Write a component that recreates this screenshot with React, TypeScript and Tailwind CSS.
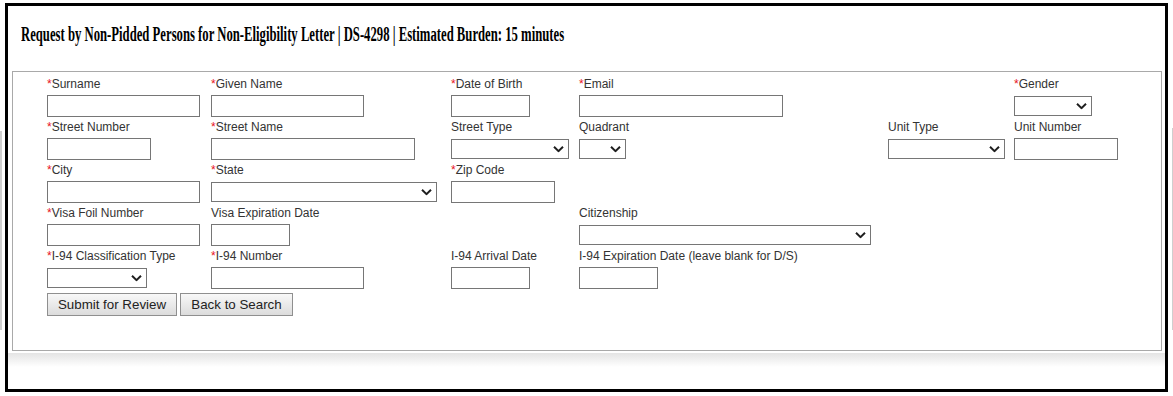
import type { ReactNode } from 'react';

type Field = {
  label: string;
  required?: boolean;
  kind: 'text' | 'select';
  width: number;
  col: string;
};

const widthClass: Record<number, string> = {
  47: 'w-[47px]',
  78: 'w-[78px]',
  79: 'w-[79px]',
  100: 'w-[100px]',
  104: 'w-[104px]',
  117: 'w-[117px]',
  118: 'w-[118px]',
  153: 'w-[153px]',
  204: 'w-[204px]',
  226: 'w-[226px]',
  292: 'w-[292px]',
};

// rows laid out on a 6-column grid, like the old table form
const rows: Field[][] = [
  [
    { label: 'Surname', required: true, kind: 'text', width: 153, col: 'col-start-1' },
    { label: 'Given Name', required: true, kind: 'text', width: 153, col: 'col-start-2' },
    { label: 'Date of Birth', required: true, kind: 'text', width: 79, col: 'col-start-3' },
    { label: 'Email', required: true, kind: 'text', width: 204, col: 'col-start-4' },
    { label: 'Gender', required: true, kind: 'select', width: 78, col: 'col-start-6' },
  ],
  [
    { label: 'Street Number', required: true, kind: 'text', width: 104, col: 'col-start-1' },
    { label: 'Street Name', required: true, kind: 'text', width: 204, col: 'col-start-2' },
    { label: 'Street Type', kind: 'select', width: 118, col: 'col-start-3' },
    { label: 'Quadrant', kind: 'select', width: 47, col: 'col-start-4' },
    { label: 'Unit Type', kind: 'select', width: 117, col: 'col-start-5' },
    { label: 'Unit Number', kind: 'text', width: 104, col: 'col-start-6' },
  ],
  [
    { label: 'City', required: true, kind: 'text', width: 153, col: 'col-start-1' },
    { label: 'State', required: true, kind: 'select', width: 226, col: 'col-start-2' },
    { label: 'Zip Code', required: true, kind: 'text', width: 104, col: 'col-start-3' },
  ],
  [
    { label: 'Visa Foil Number', required: true, kind: 'text', width: 153, col: 'col-start-1' },
    { label: 'Visa Expiration Date', kind: 'text', width: 79, col: 'col-start-2' },
    { label: 'Citizenship', kind: 'select', width: 292, col: 'col-start-4' },
  ],
  [
    { label: 'I-94 Classification Type', required: true, kind: 'select', width: 100, col: 'col-start-1' },
    { label: 'I-94 Number', required: true, kind: 'text', width: 153, col: 'col-start-2' },
    { label: 'I-94 Arrival Date', kind: 'text', width: 79, col: 'col-start-3' },
    { label: 'I-94 Expiration Date (leave blank for D/S)', kind: 'text', width: 79, col: 'col-start-4' },
  ],
];

function Chevron() {
  return (
    <svg width="11" height="7" viewBox="0 0 11 7" className="pointer-events-none absolute right-[5px] top-1/2 -translate-y-1/2">
      <path d="M1 1.2 L5.5 5.6 L10 1.2" fill="none" stroke="#1f1f1f" strokeWidth="2" />
    </svg>
  );
}

function Control({ field }: { field: Field }) {
  const w = widthClass[field.width];
  if (field.kind === 'select') {
    return (
      <div className={`relative h-[20px] ${w}`}>
        <select className="h-full w-full appearance-none border border-[#767676] bg-white" />
        <Chevron />
      </div>
    );
  }
  return <input type="text" className={`h-[22px] ${w} border border-[#767676] bg-white`} />;
}

function Cell({ field }: { field: Field }) {
  return (
    <div className={`${field.col} pb-[2px]`}>
      <div className="h-[16px] leading-[16px] whitespace-nowrap text-[12px] text-[#333]">
        {field.required && <span className="text-[#e8141c]">*</span>}
        {field.label}
      </div>
      <div className="mt-[3px] flex h-[22px] items-center">
        <Control field={field} />
      </div>
    </div>
  );
}

function Button({ children, w }: { children: ReactNode; w: string }) {
  return (
    <button
      type="button"
      className={`h-[23px] ${w} border border-[#8f8f8f] bg-gradient-to-b from-[#f8f8f8] to-[#dcdcdc] text-[13.33px] text-[#222]`}
    >
      {children}
    </button>
  );
}

export default function App() {
  return (
    <div className="flex h-[396px] w-[1173px] bg-white font-['Liberation_Sans',Arial,sans-serif]">
      <div className="mt-[131px] h-[199px] w-[2px] shrink-0 bg-[#cfcfcf]" />
      <div className="ml-[3px] mt-[3px] flex h-[389px] w-[1163px] shrink-0 flex-col border-[3px] border-black bg-white">
        <div className="h-[65px] pl-[13px] pt-[16px]">
          <h1 className="inline-block origin-left scale-x-[0.635] whitespace-nowrap font-['Liberation_Serif',serif] text-[20px] font-bold leading-[24px] text-black">
            Request by Non-Pidded Persons for Non-Eligibility Letter | DS-4298 | Estimated Burden: 15 minutes
          </h1>
        </div>

        <div className="ml-[4px] w-[1150px] border border-[#a9a9a9] pb-[34px] pl-[34px] pt-[4px]">
          {rows.map((row, i) => (
            <div key={i} className="grid grid-cols-[164px_240px_128px_309px_126px_1fr]">
              {row.map((f) => (
                <Cell key={f.label} field={f} />
              ))}
            </div>
          ))}
          <div className="mt-[2px] flex gap-[3px]">
            <Button w="w-[130px]">Submit for Review</Button>
            <Button w="w-[113px]">Back to Search</Button>
          </div>
        </div>

        <div className="mt-[2px] h-[14px] bg-gradient-to-b from-[#e4e4e4] to-white" />
      </div>
      <div className="ml-[4px] mt-[128px] h-[202px] w-px shrink-0 bg-[#cfcfcf]" />
    </div>
  );
}
